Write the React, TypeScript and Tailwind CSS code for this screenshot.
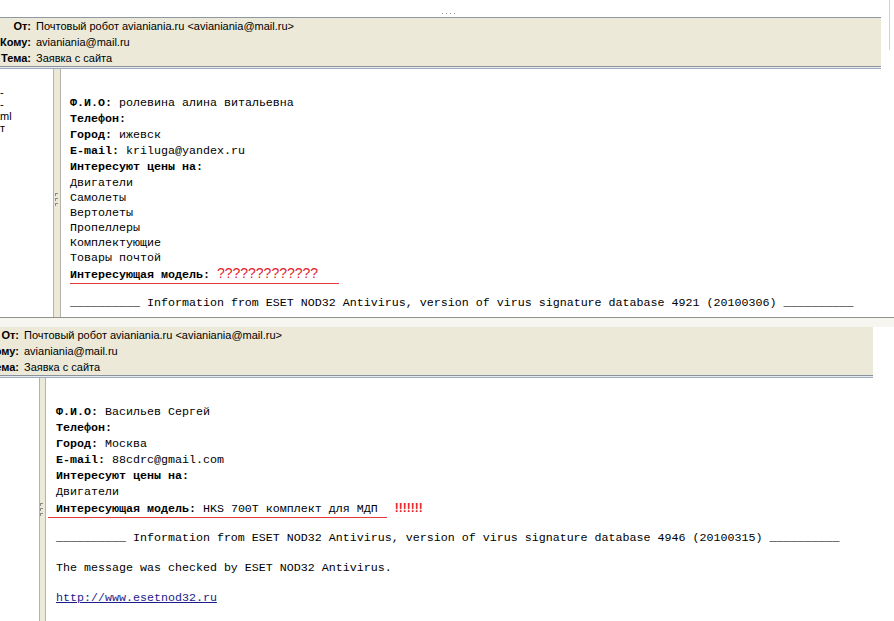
import React from 'react'

const headerRows: [string, string][] = [
  ['От:', 'Почтовый робот avianiania.ru <avianiania@mail.ru>'],
  ['Кому:', 'avianiania@mail.ru'],
  ['Тема:', 'Заявка с сайта'],
]

const sans = "font-['Liberation_Sans',Arial,sans-serif]"
const mono = "font-['Liberation_Mono','Courier_New',monospace]"

// Grip marks drawn on the vertical splitters
function Grip() {
  return (
    <svg width="4" height="14" viewBox="0 0 4 14" className="block">
      <rect x="0" y="1" width="3" height="1" fill="#8a8a8a" />
      <rect x="0" y="1" width="1" height="3" fill="#8a8a8a" />
      <rect x="0" y="6" width="3" height="1" fill="#8a8a8a" />
      <rect x="0" y="6" width="1" height="3" fill="#8a8a8a" />
      <rect x="0" y="11" width="3" height="1" fill="#8a8a8a" />
      <rect x="0" y="11" width="1" height="3" fill="#8a8a8a" />
    </svg>
  )
}

function MailHeader({ className, labelClass }: { className: string; labelClass: string }) {
  return (
    <div className={className}>
      <div className={`h-[48px] bg-[#ece9d8] flex flex-col text-[11px] text-black ${sans}`}>
        {headerRows.map(([label, value]) => (
          <div key={label} className="flex h-[16px] items-center leading-[16px] whitespace-nowrap">
            <span className={`${labelClass} shrink-0 flex justify-end font-bold`}>{label}</span>
            <span className="ml-[5px]">{value}</span>
          </div>
        ))}
      </div>
      <div className="h-px bg-[#8a929c]" />
      <div className="h-px bg-[#e9ecef]" />
      <div className="h-px bg-[#9cabbd]" />
    </div>
  )
}

function Line({ children, h = 'h-[16px] leading-[16px]' }: { children: React.ReactNode; h?: string }) {
  return <div className={`${h} whitespace-nowrap`}>{children}</div>
}

export default function App() {
  return (
    <div className="w-[894px] h-[621px] overflow-hidden bg-white flex flex-col">
      {/* first message */}
      <div className="flex shrink-0">
        <div className="w-[881px] shrink-0 flex flex-col">
          <div className="h-[17px] flex items-start pl-[442px] pt-[13px] gap-[3px]">
            <span className="w-px h-px bg-[#9a9a9a]" />
            <span className="w-px h-px bg-[#9a9a9a]" />
            <span className="w-px h-px bg-[#9a9a9a]" />
            <span className="w-px h-px bg-[#9a9a9a]" />
          </div>
          <MailHeader
            className="border-t border-[#8e98a4] overflow-hidden"
            labelClass="w-[31px]"
          />
        </div>
        <div className="flex-1 flex pl-[8px]">
          <div className="w-px h-[50px] bg-[#d2d2d2]" />
        </div>
      </div>

      <div className="h-[248px] shrink-0 flex">
        <div className={`w-[53px] shrink-0 overflow-hidden pt-[17px] text-[11px] leading-[12px] text-black ${sans}`}>
          <div>-</div>
          <div>-</div>
          <div className="-ml-[3px]">tml</div>
          <div>т</div>
        </div>
        <div className="w-[8px] shrink-0 bg-[#ece9d8] border-l border-r border-[#b5b3aa] pt-[123px] pl-[1px]">
          <Grip />
        </div>
        <div className={`flex-1 pl-[9px] pt-[26px] text-[11.67px] text-black ${mono}`}>
          <Line><b>Ф.И.О:</b> ролевина алина витальевна</Line>
          <Line><b>Телефон:</b></Line>
          <Line><b>Город:</b> ижевск</Line>
          <Line><b>E-mail:</b> kriluga@yandex.ru</Line>
          <Line><b>Интересуют цены на:</b></Line>
          <Line>Двигатели</Line>
          <Line h="h-[15px] leading-[15px]">Самолеты</Line>
          <Line h="h-[15px] leading-[15px]">Вертолеты</Line>
          <Line h="h-[15px] leading-[15px]">Пропеллеры</Line>
          <Line h="h-[15px] leading-[15px]">Комплектующие</Line>
          <Line h="h-[15px] leading-[15px]">Товары почтой</Line>
          <Line h="h-[15px] leading-[15px]">
            <b>Интересующая модель:</b>{' '}
            <span className={`text-[14px] text-[#e3232d] ${sans}`}>?????????????</span>
          </Line>
          <div className="mt-[2px] h-px w-[269px] bg-[#e5383b]" />
          <div className="h-[12px]" />
          <Line h="h-[15px] leading-[15px]">
            __________ Information from ESET NOD32 Antivirus, version of virus signature database 4921 (20100306) __________
          </Line>
        </div>
      </div>

      <div className="h-px shrink-0 bg-[#8f938a]" />

      {/* second message */}
      <div className="h-[9px] shrink-0 bg-[#f6f5ef]" />
      <MailHeader className="w-[873px] shrink-0 overflow-hidden" labelClass="w-[19px]" />

      <div className="flex-1 flex">
        <div className="w-[39px] shrink-0" />
        <div className="w-[7px] shrink-0 bg-[#ece9d8] border-l border-r border-[#b5b3aa] pt-[124px]">
          <Grip />
        </div>
        <div className={`flex-1 pl-[10px] pt-[26px] text-[11.67px] text-black ${mono}`}>
          <Line><b>Ф.И.О:</b> Васильев Сергей</Line>
          <Line><b>Телефон:</b></Line>
          <Line><b>Город:</b> Москва</Line>
          <Line><b>E-mail:</b> 88cdrc@gmail.com</Line>
          <Line><b>Интересуют цены на:</b></Line>
          <Line>Двигатели</Line>
          <Line>
            <b>Интересующая модель:</b> HKS 700T комплект для МДП
            <span className={`ml-[17px] text-[12px] font-bold text-[#e3232d] ${sans}`}>!!!!!!!</span>
          </Line>
          <div className="mt-px -ml-[8px] h-px w-[339px] bg-[#e5383b]" />
          <div className="h-[13px]" />
          <Line h="h-[15px] leading-[15px]">
            __________ Information from ESET NOD32 Antivirus, version of virus signature database 4946 (20100315) __________
          </Line>
          <div className="h-[15px]" />
          <Line h="h-[15px] leading-[15px]">The message was checked by ESET NOD32 Antivirus.</Line>
          <div className="h-[15px]" />
          <Line h="h-[15px] leading-[15px]">
            <a className="text-[#1c1c8a] underline">http://www.esetnod32.ru</a>
          </Line>
        </div>
      </div>
    </div>
  )
}
